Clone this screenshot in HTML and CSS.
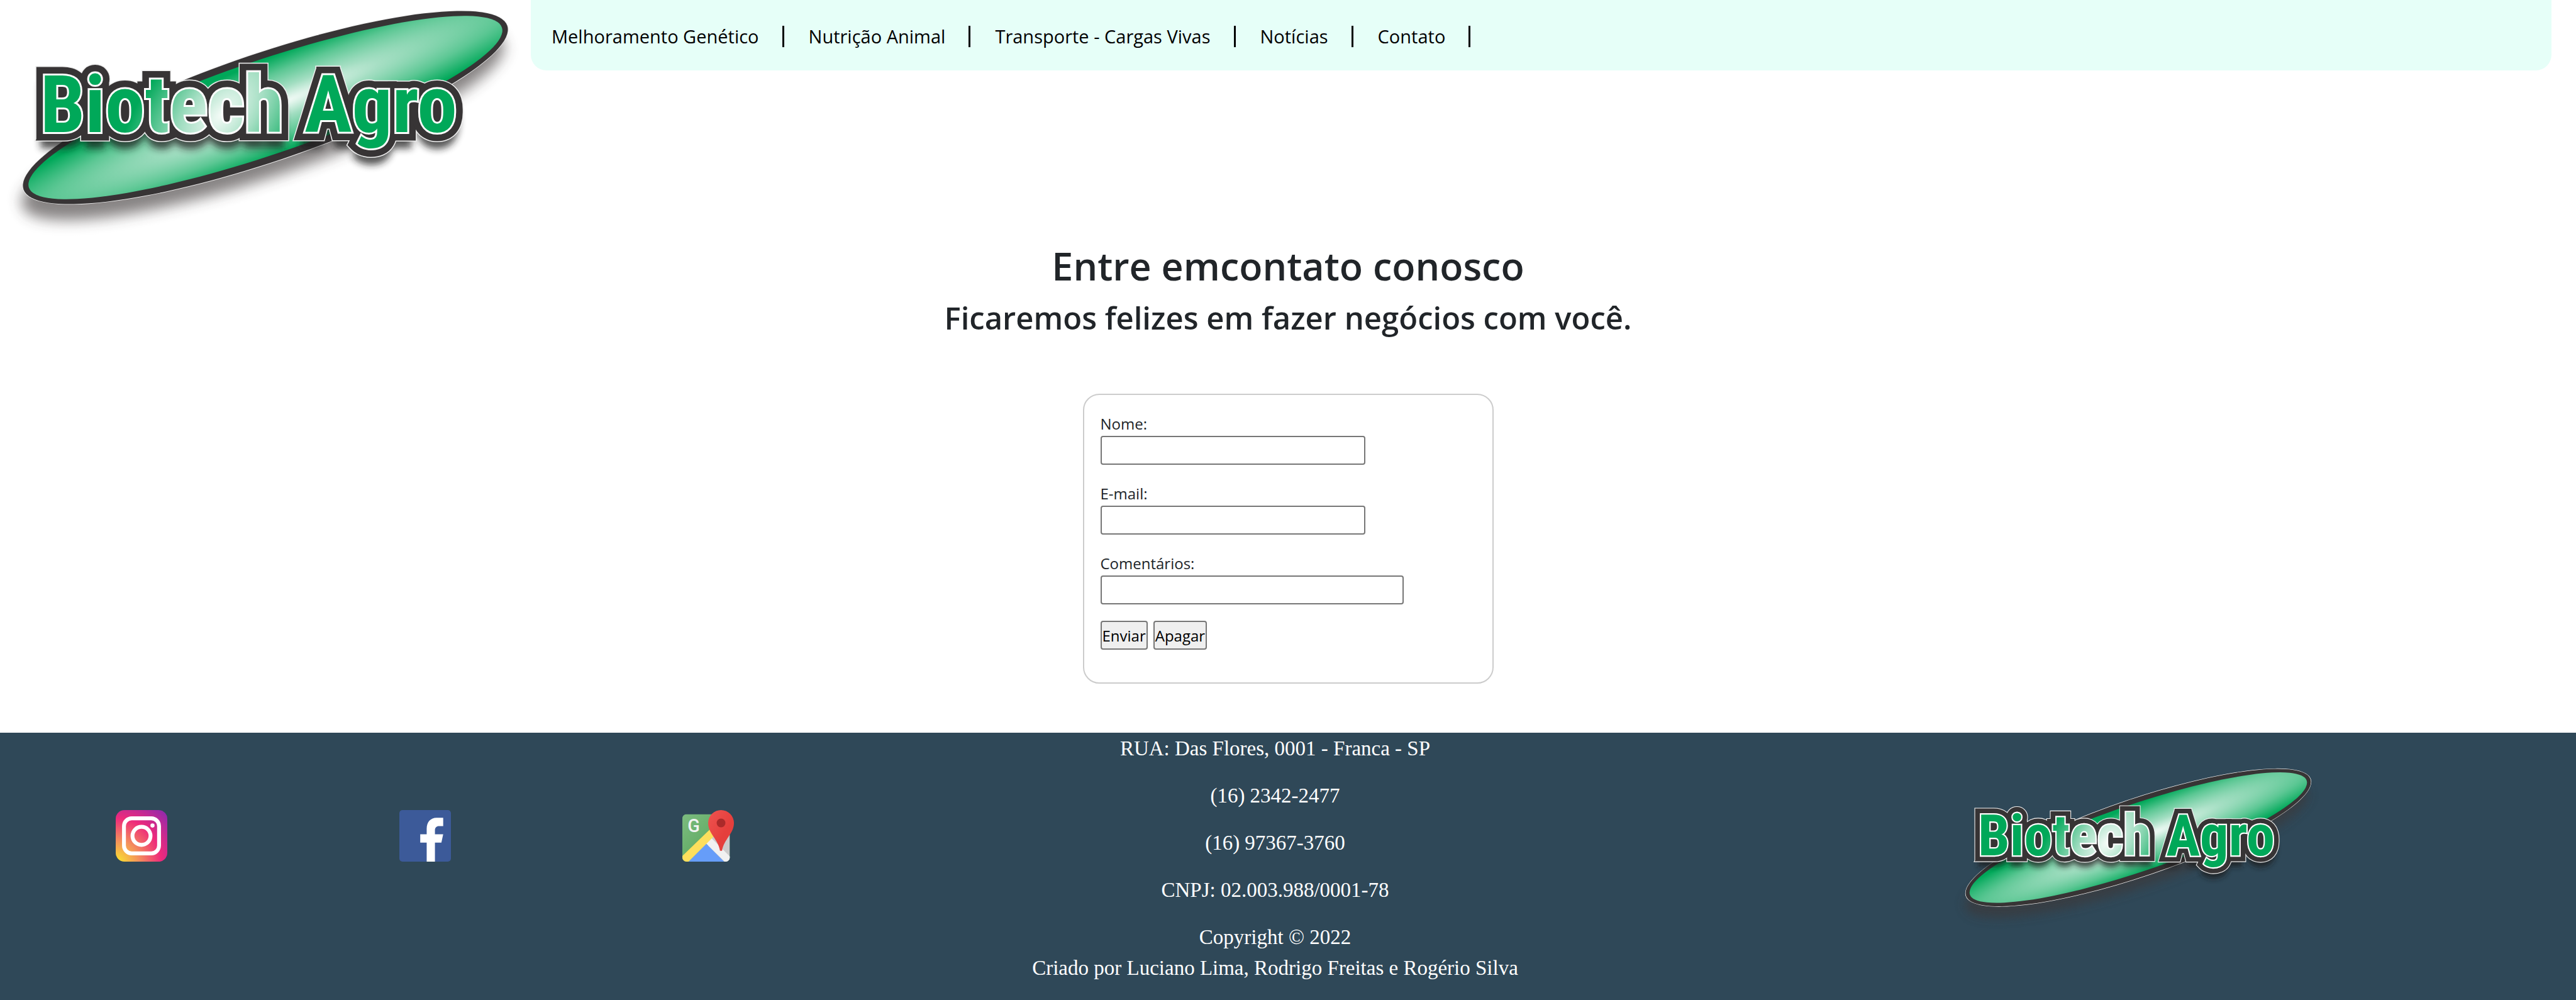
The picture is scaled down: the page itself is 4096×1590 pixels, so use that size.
FILE: index.html
```html
<!DOCTYPE html>
<html lang="pt-BR">
<head>
  <meta charset="utf-8">
  <meta name="viewport" content="width=device-width, initial-scale=1">
  <title>Biotech Agro - Contato</title>
  <link rel="stylesheet" href="styles.css">
</head>
<body>
  <svg class="defs" width="0" height="0" aria-hidden="true">
    <defs>
      <radialGradient id="disc" gradientUnits="userSpaceOnUse" cx="0" cy="0" r="1" gradientTransform="translate(20 2) rotate(-4) scale(600 74)">
        <stop offset="0" stop-color="#f6fcf9"/>
        <stop offset=".3" stop-color="#a3dec2"/>
        <stop offset=".65" stop-color="#5cc794"/>
        <stop offset="1" stop-color="#00a859"/>
      </radialGradient>
      <radialGradient id="lettering" gradientUnits="userSpaceOnUse" cx="0" cy="0" r="1" gradientTransform="translate(352 182) rotate(-50) scale(220 120)">
        <stop offset="0" stop-color="#f4fbf7"/>
        <stop offset=".4" stop-color="#a3dec2"/>
        <stop offset="1" stop-color="#00a859"/>
      </radialGradient>
      <filter id="soft" x="-20%" y="-60%" width="140%" height="220%"><feGaussianBlur stdDeviation="11"/></filter>
      <filter id="softer" x="-20%" y="-60%" width="140%" height="220%"><feGaussianBlur stdDeviation="6"/></filter>
      <symbol id="brand" viewBox="0 0 844 375">
        <ellipse cx="418" cy="198" rx="404" ry="84" transform="rotate(-18.7 418 198)" fill="#3e3839" opacity=".62" filter="url(#soft)"/>
        <g transform="translate(422 171) rotate(-18.7)">
          <ellipse rx="407" ry="87" fill="#eeeeee"/>
          <ellipse rx="406" ry="86" fill="#373435"/>
          <ellipse rx="397" ry="75" fill="url(#disc)"/>
        </g>
        <g class="brand-text">
          <g class="brand-shadow" filter="url(#softer)"><text x="64" y="229">Biotech</text><text x="484" y="229">Agro</text></g>
          <g class="brand-rim"><text x="64" y="210">Biotech</text><text x="484" y="210">Agro</text></g>
          <g class="brand-dark"><text x="64" y="210">Biotech</text><text x="484" y="210">Agro</text></g>
          <g class="brand-white"><text x="64" y="210">Biotech</text><text x="484" y="210">Agro</text></g>
          <g fill="url(#lettering)"><text x="64" y="210">Biotech</text><text x="484" y="210">Agro</text></g>
        </g>
      </symbol>
    </defs>
  </svg>

  <header class="top">
    <svg class="top-logo" viewBox="0 0 844 375" role="img" aria-label="Biotech Agro"><use href="#brand"/></svg>
    <nav class="menu">
      <a href="#">Melhoramento Genético</a>
      <a href="#">Nutrição Animal</a>
      <a href="#">Transporte - Cargas Vivas</a>
      <a href="#">Notícias</a>
      <a href="#">Contato</a>
    </nav>
  </header>

  <main class="content">
    <h1>Entre emcontato conosco</h1>
    <h2>Ficaremos felizes em fazer negócios com você.</h2>
    <form class="contact">
      <div class="field">
        <label for="nome">Nome:</label>
        <input id="nome" type="text">
      </div>
      <div class="field">
        <label for="email">E-mail:</label>
        <input id="email" type="email">
      </div>
      <div class="field">
        <label for="comentarios">Comentários:</label>
        <input id="comentarios" class="wide" type="text">
      </div>
      <div class="actions">
        <button type="submit">Enviar</button>
        <button type="reset">Apagar</button>
      </div>
    </form>
  </main>

  <footer class="bottom">
    <div class="social">
      <a href="#" aria-label="Instagram">
        <svg viewBox="0 0 100 100">
          <defs>
            <radialGradient id="ig" gradientUnits="userSpaceOnUse" cx="4" cy="100" r="140">
              <stop offset="0" stop-color="#f9e22f"/>
              <stop offset=".28" stop-color="#f4935a"/>
              <stop offset=".6" stop-color="#ee2a7b"/>
              <stop offset="1" stop-color="#8429b4"/>
            </radialGradient>
          </defs>
          <rect width="100" height="100" rx="17" fill="url(#ig)"/>
          <rect x="16" y="16" width="68" height="68" rx="15" fill="none" stroke="#fff" stroke-width="7.5"/>
          <circle cx="50" cy="50" r="17.5" fill="none" stroke="#fff" stroke-width="7.5"/>
          <circle cx="71.3" cy="30" r="4" fill="#fff"/>
        </svg>
      </a>
      <a href="#" aria-label="Facebook">
        <svg viewBox="0 0 100 100">
          <rect width="100" height="100" rx="6" fill="#3c5a99"/>
          <path fill="#fff" d="M53 100V63H40.500V47H53V36C53 23 61 15 72 15H85V31H77C72 31 69 34 69 39V47H85L81.500 63H69V100Z"/>
        </svg>
      </a>
      <a href="#" aria-label="Google Maps">
        <svg viewBox="0 0 100 100">
          <defs>
            <clipPath id="card"><rect y="8" width="92" height="92" rx="8"/></clipPath>
            <linearGradient id="land" x1="0" y1="0" x2="1" y2="1"><stop offset="0" stop-color="#7cbc7f"/><stop offset=".5" stop-color="#66ae69"/></linearGradient>
            <linearGradient id="pin" x1="0" y1="0" x2="1" y2="1"><stop offset="0" stop-color="#ef5350"/><stop offset=".6" stop-color="#e53f3c"/></linearGradient>
          </defs>
          <g clip-path="url(#card)">
            <rect y="8" width="92" height="92" fill="url(#land)"/>
            <path fill="#cccccc" d="M50 59 92 20V100H50Z"/>
            <path fill="#f1f1f1" d="M46 65 56 54 94 92V102H84Z"/>
            <path fill="#669df9" d="M11 101 46 65 82 101Z"/>
            <path fill="#fddf5c" d="M-2 91 60 31 69 43 10 102H-2Z"/>
          </g>
          <text class="map-g" x="10" y="43">G</text>
          <path fill="url(#pin)" d="M75 0A25 25 0 0 1 100 25C100 46 80 57 77 79H73C70 57 50 46 50 25A25 25 0 0 1 75 0Z"/>
          <circle cx="75" cy="25" r="8.500" fill="#ab2a2a"/>
        </svg>
      </a>
    </div>
    <div class="info">
      <p>RUA: Das Flores, 0001 - Franca - SP</p>
      <p>(16) 2342-2477</p>
      <p>(16) 97367-3760</p>
      <p>CNPJ: 02.003.988/0001-78</p>
      <p>Copyright © 2022<br>Criado por Luciano Lima, Rodrigo Freitas e Rogério Silva</p>
    </div>
    <div class="bottom-brand">
      <svg class="bottom-logo" viewBox="0 0 844 375" role="img" aria-label="Biotech Agro"><use href="#brand"/></svg>
    </div>
  </footer>
</body>
</html>
```
FILE: styles.css
```css
* {
  box-sizing: border-box;
}

body {
  display: flex;
  flex-direction: column;
  min-height: 100vh;
  margin: 0;
  background: #fff;
  color: #212529;
  font-family: "Open Sans", "Noto Sans", sans-serif;
  font-size: 24px;
  line-height: 39px;
}

.defs {
  position: absolute;
}

/* Brand mark */
.brand-text {
  font-family: "Liberation Sans Narrow", "Roboto Condensed", "DejaVu Sans Condensed", sans-serif;
  font-size: 127px;
  font-weight: 700;
}

.brand-shadow {
  fill: #1c1a1a;
  stroke: #1c1a1a;
  stroke-width: 14px;
  opacity: 0.75;
}

.brand-rim {
  fill: #eee;
  stroke: #eee;
  stroke-width: 30px;
}

.brand-dark {
  fill: #373435;
  stroke: #373435;
  stroke-width: 27px;
}

.brand-white {
  fill: #fff;
  stroke: #fff;
  stroke-width: 6px;
}

/* Header */
.top {
  display: flex;
  align-items: flex-start;
  padding-right: 39px;
}

.top-logo {
  flex: none;
  width: 844px;
  height: 375px;
}

.menu {
  flex: 1;
  display: flex;
  gap: 6px;
  padding: 41px 0 37px;
  background: #e6fff8;
  border-radius: 0 0 25px 25px;
}

.menu a {
  padding: 0 37px 0 33px;
  border-right: 3px solid #000;
  color: #000;
  font-size: 29px;
  line-height: 34px;
  text-decoration: none;
  white-space: nowrap;
}

/* Contact form */
.content {
  display: flex;
  flex-direction: column;
  align-items: center;
  padding: 9px 0 78px;
}

h1,
h2 {
  margin: 0 0 12px;
  font-weight: 600;
  text-align: center;
}

h1 {
  font-size: 61px;
  line-height: 78px;
}

h2 {
  margin-bottom: 90px;
  font-size: 49px;
  line-height: 62px;
}

.contact {
  display: flex;
  flex-direction: column;
  gap: 26px;
  width: 653px;
  padding: 26px 26px 52px;
  border: 2px solid #ccc;
  border-radius: 26px;
}

.field label {
  display: block;
}

.field input {
  display: block;
  width: 421px;
  height: 46px;
  padding: 2px;
  background: #fff;
  border: 2px solid #767676;
  border-radius: 4px;
  font: inherit;
}

.field .wide {
  width: 482px;
}

.actions {
  display: flex;
  gap: 9px;
}

.actions button {
  height: 46px;
  padding: 0 1px;
  background: #efefef;
  border: 2px solid #767676;
  border-radius: 4px;
  color: #000;
  font-family: inherit;
  font-size: 24px;
}

/* Footer */
.bottom {
  flex: 1;
  display: grid;
  grid-template-columns: repeat(3, 33%);
  background: #2f4858;
}

.social {
  display: grid;
  grid-template-columns: repeat(3, 1fr);
  justify-items: center;
  align-items: start;
  padding-top: 123px;
}

.social a,
.social svg {
  display: block;
  width: 82px;
  height: 82px;
}

.map-g {
  fill: #f3f3f3;
  font-family: Roboto, sans-serif;
  font-size: 35px;
  font-weight: 500;
}

.info {
  padding-top: 1px;
  color: #fff;
  font-family: "Liberation Serif", serif;
  font-size: 33px;
  line-height: 49px;
  text-align: center;
}

.info p {
  margin: 0 0 26px;
}

.bottom-brand {
  display: flex;
  justify-content: center;
  align-items: flex-start;
  padding: 45px 0 0 42px;
}

.bottom-logo {
  width: 602px;
  height: 267px;
}
```
